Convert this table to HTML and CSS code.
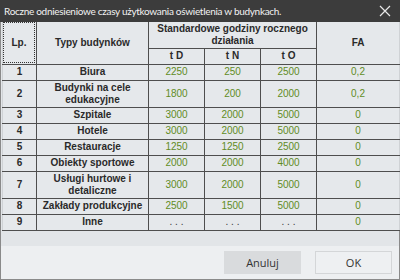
FILE: index.html
```html
<!DOCTYPE html>
<html lang="pl">
<head>
<meta charset="utf-8">
<link rel="stylesheet" href="styles.css">
</head>
<body>
<div class="window">
  <div class="titlebar">
    <span class="title">Roczne odniesieniowe czasy użytkowania oświetlenia w budynkach.</span>
    <svg class="close" width="12" height="12" viewBox="0 0 12 12"><path d="M1 1 L11 11 M11 1 L1 11" stroke="#e8e8e8" stroke-width="1.2" fill="none"/></svg>
  </div>
  <div class="content">
    <table class="grid">
      <colgroup>
        <col class="c-lp"><col class="c-typ"><col class="c-t"><col class="c-t"><col class="c-t"><col class="c-fa">
      </colgroup>
      <thead>
        <tr class="h1">
          <th rowspan="2"><div class="focus">Lp.</div></th>
          <th rowspan="2">Typy budynków</th>
          <th colspan="3">Standardowe godziny rocznego działania</th>
          <th rowspan="2">FA</th>
        </tr>
        <tr class="h2">
          <th>t D</th><th>t N</th><th>t O</th>
        </tr>
      </thead>
      <tbody>
        <tr class="s"><td class="lp">1</td><td class="nm">Biura</td><td class="v">2250</td><td class="v">250</td><td class="v">2500</td><td class="v">0,2</td></tr>
        <tr class="d"><td class="lp">2</td><td class="nm">Budynki na cele edukacyjne</td><td class="v">1800</td><td class="v">200</td><td class="v">2000</td><td class="v">0,2</td></tr>
        <tr class="s"><td class="lp">3</td><td class="nm">Szpitale</td><td class="v">3000</td><td class="v">2000</td><td class="v">5000</td><td class="v">0</td></tr>
        <tr class="s"><td class="lp">4</td><td class="nm">Hotele</td><td class="v">3000</td><td class="v">2000</td><td class="v">5000</td><td class="v">0</td></tr>
        <tr class="s"><td class="lp">5</td><td class="nm">Restauracje</td><td class="v">1250</td><td class="v">1250</td><td class="v">2500</td><td class="v">0</td></tr>
        <tr class="s"><td class="lp">6</td><td class="nm">Obiekty sportowe</td><td class="v">2000</td><td class="v">2000</td><td class="v">4000</td><td class="v">0</td></tr>
        <tr class="d"><td class="lp">7</td><td class="nm">Usługi hurtowe i detaliczne</td><td class="v">3000</td><td class="v">2000</td><td class="v">5000</td><td class="v">0</td></tr>
        <tr class="s"><td class="lp">8</td><td class="nm">Zakłady produkcyjne</td><td class="v">2500</td><td class="v">1500</td><td class="v">5000</td><td class="v">0</td></tr>
        <tr class="s"><td class="lp">9</td><td class="nm">Inne</td><td class="v dots">. . .</td><td class="v dots">. . .</td><td class="v dots">. . .</td><td class="v">0</td></tr>
      </tbody>
    </table>
  </div>
  <div class="footer">
    <button class="btn cancel">Anuluj</button>
    <button class="btn ok">OK</button>
  </div>
</div>
</body>
</html>
```
FILE: styles.css
```css
html, body {
  margin: 0;
  padding: 0;
  background: #e2e5e8;
}
.window {
  width: 400px;
  height: 280px;
  box-sizing: border-box;
  display: flex;
  flex-direction: column;
  background: #e2e5e8;
  border-left: 1px solid #8a8a8a;
  border-right: 1px solid #8a8a8a;
  border-bottom: 1px solid #8a8a8a;
}
.titlebar {
  height: 22px;
  flex: none;
  background: #3c3c3c;
  color: #f2f2f2;
  display: flex;
  align-items: center;
  justify-content: space-between;
  padding: 0 9px 0 4px;
  margin: 0 -1px;
  font-family: Lato, "Open Sans", sans-serif;
  font-size: 10px;
  letter-spacing: -0.3px;
}
.title { white-space: nowrap; }
.close { display: block; }
.content {
  padding: 0 0 0 1px;
  height: 223px;
  flex: none;
}
.grid {
  border-collapse: collapse;
  table-layout: fixed;
  width: 397px;
  font-family: "Liberation Sans", Arial, sans-serif;
  font-size: 10px;
  color: #2a2a2a;
  background: #e5e8eb;
}
.c-lp { width: 34px; }
.c-typ { width: 112px; }
.c-t { width: 56px; }
.c-fa { width: 83px; }
.grid th, .grid td {
  border: 1px solid #4e4e4e;
  padding: 0 2px;
  text-align: center;
  vertical-align: middle;
  line-height: 12px;
}
.grid th { font-weight: bold; }
.grid tr:first-child th { border-top: none; }
.grid th:first-child, .grid td:first-child { border-left: 1px solid #cfd2d5; }
.grid th:last-child, .grid td:last-child { border-right: 1px solid #cfd2d5; }
.h1 { height: 26px; }
.h2 { height: 16px; }
.h2 th { height: 15px; }
.h1 th[rowspan] { padding: 0; }
.focus {
  border: 1px dotted #333;
  height: 39px;
  margin: 0 1px 0 0;
  display: flex;
  align-items: center;
  justify-content: center;
}
.s td { height: 15px; }
.d td { height: 26px; }
.lp { font-weight: bold; }
.nm { font-weight: bold; }
.v { color: #618c1f; }
.dots { letter-spacing: 0; color: #3a3a3a; }
.footer {
  margin-top: auto;
  height: 33px;
  flex: none;
  background: #edeff1;
  display: flex;
  align-items: center;
  justify-content: flex-end;
  gap: 14px;
  padding: 0 7px 0 0;
}
.btn {
  width: 77px;
  height: 23px;
  font-family: "Open Sans", "Noto Sans", sans-serif;
  font-size: 11px;
  color: #333;
  border: 1px solid #d4d6d8;
  background: #eef0f2;
  padding: 0;
}
.btn.cancel {
  background: #d9dbdd;
  border-color: #d9dbdd;
}
```
